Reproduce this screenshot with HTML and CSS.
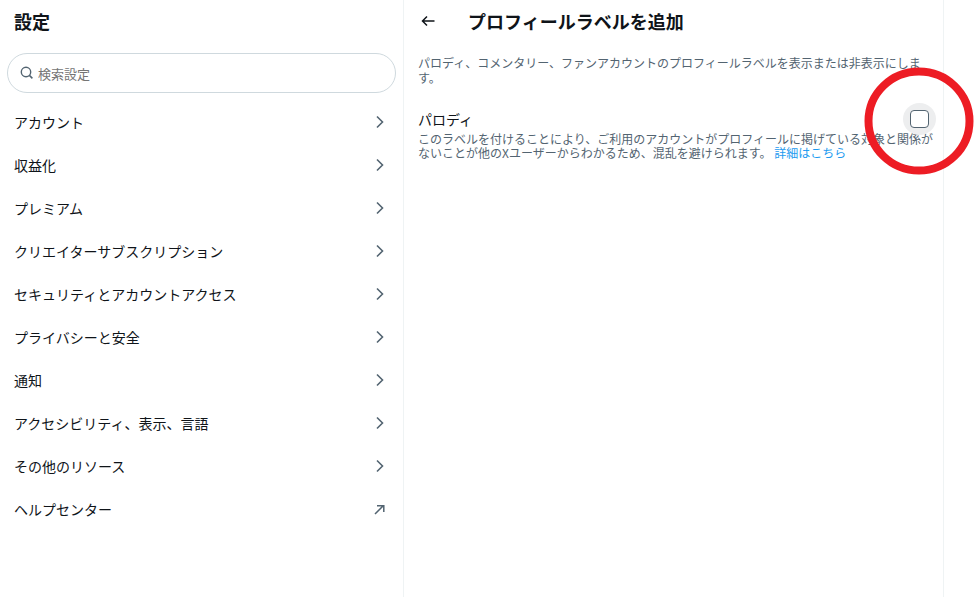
FILE: index.html
```html
<!DOCTYPE html>
<html lang="ja">
<head>
    <meta charset="UTF-8">
    <meta name="viewport" content="width=device-width, initial-scale=1">
    <title>設定</title>
    <link rel="stylesheet" href="styles.css">
</head>
<body>
    <!-- Shared icons -->
    <svg class="icon-defs" aria-hidden="true">
        <symbol id="chevron" viewBox="0 0 12 14">
            <path d="M3 1.5L8.5 7 3 12.5" fill="none" stroke="currentColor" stroke-width="1.6"/>
        </symbol>
    </svg>

    <div class="layout">
        <nav class="sidebar" aria-label="設定">
            <h1 class="title">設定</h1>
            <div class="search">
                <svg class="search-icon" viewBox="0 0 14 14" aria-hidden="true">
                    <circle cx="6" cy="6" r="4.7" fill="none" stroke="currentColor" stroke-width="1.4"/>
                    <path d="M9.4 9.4l3 3" stroke="currentColor" stroke-width="1.5"/>
                </svg>
                <input class="search-input" type="text" placeholder="検索設定" aria-label="検索設定">
            </div>
            <ul class="menu">
                <li><a class="menu-link" href="#">アカウント<svg class="menu-icon"><use href="#chevron"/></svg></a></li>
                <li><a class="menu-link" href="#">収益化<svg class="menu-icon"><use href="#chevron"/></svg></a></li>
                <li><a class="menu-link" href="#">プレミアム<svg class="menu-icon"><use href="#chevron"/></svg></a></li>
                <li><a class="menu-link" href="#">クリエイターサブスクリプション<svg class="menu-icon"><use href="#chevron"/></svg></a></li>
                <li><a class="menu-link" href="#">セキュリティとアカウントアクセス<svg class="menu-icon"><use href="#chevron"/></svg></a></li>
                <li><a class="menu-link" href="#">プライバシーと安全<svg class="menu-icon"><use href="#chevron"/></svg></a></li>
                <li><a class="menu-link" href="#">通知<svg class="menu-icon"><use href="#chevron"/></svg></a></li>
                <li><a class="menu-link" href="#">アクセシビリティ、表示、言語<svg class="menu-icon"><use href="#chevron"/></svg></a></li>
                <li><a class="menu-link" href="#">その他のリソース<svg class="menu-icon"><use href="#chevron"/></svg></a></li>
                <li>
                    <a class="menu-link" href="#">ヘルプセンター<svg class="menu-icon" viewBox="0 0 12 14">
                        <path d="M1 12l8-8M3 3.7h6.8v6.4" fill="none" stroke="currentColor" stroke-width="1.5"/>
                    </svg></a>
                </li>
            </ul>
        </nav>

        <main class="detail">
            <header class="detail-header">
                <button class="back" type="button" aria-label="戻る">
                    <svg class="back-icon" viewBox="0 0 14 12" aria-hidden="true">
                        <path d="M6 1.5L1.5 6 6 10.5M1.5 6h12" fill="none" stroke="currentColor" stroke-width="1.5"/>
                    </svg>
                </button>
                <h2 class="title">プロフィールラベルを追加</h2>
            </header>
            <p class="intro">パロディ、コメンタリー、ファンアカウントのプロフィールラベルを表示または非表示にします。</p>
            <div class="option">
                <label class="option-label" for="parody">パロディ</label>
                <span class="check-halo">
                    <input class="check" type="checkbox" id="parody">
                    <svg class="marker" viewBox="0 0 110 108" aria-hidden="true">
                        <ellipse cx="55" cy="54" rx="50.5" ry="49.5" fill="none" stroke="#ed1c24" stroke-width="8"/>
                    </svg>
                </span>
            </div>
            <p class="option-text">このラベルを付けることにより、ご利用のアカウントがプロフィールに掲げている対象と関係がないことが他のXユーザーからわかるため、混乱を避けられます。 <a class="more" href="#">詳細はこちら</a></p>
        </main>
    </div>
</body>
</html>
```
FILE: styles.css
```css
* {
    box-sizing: border-box;
}
body {
    margin: 0;
    background: #fff;
    color: #0f1419;
    font-family: "Noto Sans CJK JP", sans-serif;
    font-size: 14px;
}
.icon-defs {
    display: none;
}
.layout {
    display: grid;
    grid-template-columns: 404px 1fr;
    min-height: 100vh;
    padding-right: 31px;
}
.sidebar,
.detail {
    border-right: 1px solid #eff3f4;
}
.title {
    margin: 0;
    font-size: 18px;
    font-weight: 700;
    line-height: 42px;
}
.sidebar .title {
    padding-left: 14px;
}

/* Search */
.search {
    display: flex;
    align-items: center;
    gap: 4px;
    height: 40px;
    margin: 11px 7px 7px;
    padding: 0 12px;
    border: 1px solid #cfd9de;
    border-radius: 20px;
    color: #536471;
}
.search-icon {
    width: 14px;
    height: 14px;
}
.search-input {
    flex: 1;
    min-width: 0;
    padding: 0;
    border: none;
    outline: none;
    background: none;
    font-family: inherit;
    font-size: 13px;
}
.search-input::placeholder {
    color: #757575;
}

/* Menu */
.menu {
    margin: 0;
    padding: 0;
    list-style: none;
}
.menu-link {
    display: flex;
    align-items: center;
    justify-content: space-between;
    height: 43px;
    padding: 0 17px 0 14px;
    color: #0f1419;
    text-decoration: none;
}
.menu-icon {
    width: 12px;
    height: 14px;
    color: #536471;
}

/* Detail */
.detail-header {
    display: flex;
    align-items: center;
    gap: 32px;
    padding-left: 16px;
}
.back {
    display: flex;
    align-items: center;
    justify-content: center;
    width: 16px;
    height: 16px;
    padding: 0;
    border: none;
    background: none;
    color: #0f1419;
    cursor: pointer;
}
.back-icon {
    width: 14px;
    height: 12px;
}
.intro {
    margin: 13px 14px 18px;
    color: #536471;
    font-size: 12px;
    line-height: 15px;
}
.option {
    display: flex;
    align-items: center;
    justify-content: space-between;
    padding: 0 7px 0 14px;
}
.check-halo {
    position: relative;
    display: flex;
    align-items: center;
    justify-content: center;
    width: 33px;
    height: 32px;
    border-radius: 50%;
    background: #edeeef;
}
.check {
    appearance: none;
    width: 19px;
    height: 18px;
    margin: 0;
    border: 1px solid #536471;
    border-radius: 4px;
    background: #fff;
    cursor: pointer;
}
.check:checked {
    background: #1d9bf0;
}
.marker {
    position: absolute;
    top: -36px;
    left: -39px;
    width: 110px;
    height: 108px;
    pointer-events: none;
}
.option-text {
    margin: -3px 8px 0 14px;
    color: #536471;
    font-size: 12px;
    line-height: 14px;
}
.more {
    color: #1d9bf0;
    text-decoration: none;
}
```
